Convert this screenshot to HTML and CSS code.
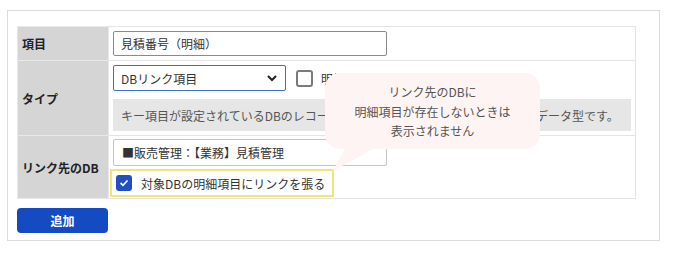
FILE: index.html
```html
<!DOCTYPE html>
<html>
<head>
    <title>項目の追加</title>
    <link rel="stylesheet" href="styles.css">
</head>
<body>
    <div class="panel">
        <table class="form">
            <tr>
                <th>項目</th>
                <td><div class="field name">見積番号（明細）</div></td>
            </tr>
            <tr>
                <th>タイプ</th>
                <td>
                    <div class="type-line">
                        <div class="select">
                            <span>DBリンク項目</span>
                            <svg width="12" height="8" viewBox="0 0 12 8"><path d="M2 2 L6 6 L10 2" fill="none" stroke="#222" stroke-width="2"/></svg>
                        </div>
                        <span class="check off"></span>
                        <span class="check-label">明細項目にする</span>
                    </div>
                    <div class="info">キー項目が設定されているDBのレコードを参照して、DBの値を表示するためデータ型です。</div>
                </td>
            </tr>
            <tr>
                <th>リンク先のDB</th>
                <td class="last">
                    <div class="field db">■販売管理：【業務】見積管理</div>
                    <div class="highlight">
                        <span class="check on">
                            <svg width="10" height="8" viewBox="0 0 10 8"><path d="M1.5 4 L4 6.3 L8.5 1.5" fill="none" stroke="#fff" stroke-width="1.8"/></svg>
                        </span>
                        <span class="check-label">対象DBの明細項目にリンクを張る</span>
                    </div>
                </td>
            </tr>
        </table>
        <button class="btn">追加</button>

        <!-- 吹き出し -->
        <div class="tooltip">
            リンク先のDBに<br>
            明細項目が存在しないときは<br>
            表示されません
        </div>
    </div>
</body>
</html>
```

FILE: styles.css
```css
body {
    margin: 0;
    font-family: "Noto Sans CJK JP", "Noto Sans", sans-serif;
    font-size: 12px;
    color: #333;
    background: #fff;
}
.panel {
    position: relative;
    box-sizing: border-box;
    width: 653px;
    height: 231px;
    margin: 10px 0 0 7px;
    padding: 15px 9px 0;
    border: 1px solid #dcdcdc;
}
.form {
    width: 619px;
    border-collapse: collapse;
    border: 1px solid #e4e4e4;
}
.form th {
    width: 86px;
    padding: 0 0 0 4px;
    background: #d5d5d5;
    border: 1px solid #e8e8e8;
    text-align: left;
    font-weight: bold;
    color: #222;
}
.form td {
    padding: 4px 4px;
    border: 1px solid #e4e4e4;
}
.form td.last {
    padding: 3px 4px 1px;
}
.field {
    box-sizing: border-box;
    height: 25px;
    width: 274px;
    padding-left: 7px;
    border: 1px solid #8a8a8a;
    border-radius: 2px;
    display: flex;
    align-items: center;
    color: #333;
}
.field.db {
    height: 27px;
    border-color: #c4c4c4;
    padding-left: 8px;
}
.type-line {
    display: flex;
    align-items: center;
}
.select {
    box-sizing: border-box;
    width: 173px;
    height: 26px;
    padding: 0 7px;
    border: 1px solid #3b6dd6;
    border-radius: 2px;
    display: flex;
    align-items: center;
    justify-content: space-between;
}
.check {
    box-sizing: border-box;
    width: 16px;
    height: 16px;
    border-radius: 3px;
    display: inline-flex;
    align-items: center;
    justify-content: center;
    flex-shrink: 0;
}
.check.off {
    margin: 0 8px 0 10px;
    width: 17px;
    height: 17px;
    border: 2px solid #7a7a7a;
}
.check.on {
    background: #1f4fc0;
}
.check-label {
    color: #333;
}
.info {
    box-sizing: border-box;
    height: 32px;
    margin-top: 8px;
    padding-left: 8px;
    background: #e6e6e6;
    display: flex;
    align-items: center;
    color: #555;
}
.highlight {
    box-sizing: border-box;
    width: 224px;
    height: 28px;
    margin: 3px 0 0 -3px;
    padding-left: 4px;
    border: 2px solid #f4e27a;
    display: flex;
    align-items: center;
    gap: 9px;
}
.btn {
    display: block;
    width: 91px;
    height: 25px;
    margin-top: 9px;
    border: none;
    border-radius: 4px;
    background: #144bc2;
    color: #fff;
    font-family: inherit;
    font-size: 12px;
    font-weight: bold;
}
.tooltip {
    position: absolute;
    left: 317px;
    top: 62px;
    width: 215px;
    height: 76px;
    box-sizing: border-box;
    padding-top: 9px;
    border-radius: 15px;
    background: #fff4f4;
    color: #555;
    text-align: center;
    line-height: 19.5px;
}
.tooltip::after {
    content: "";
    position: absolute;
    left: 8px;
    top: 75px;
    width: 42px;
    height: 23px;
    background: #fff4f4;
    clip-path: polygon(12px 0, 42px 0, 0 100%);
}
```
